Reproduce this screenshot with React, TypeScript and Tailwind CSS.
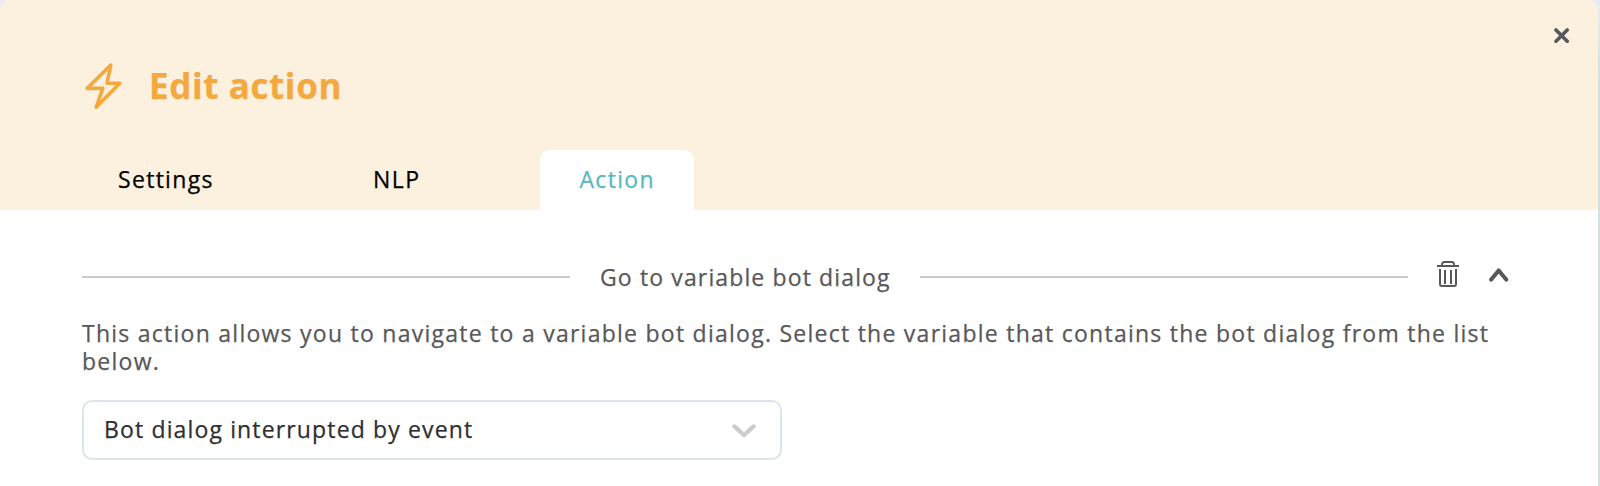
function BoltIcon() {
  return (
    <svg width="40" height="50" viewBox="0 0 40 50" fill="none" stroke="#f3a93f" strokeWidth="3.6" strokeLinecap="round" strokeLinejoin="round">
      <path d="M27.8 4 4.2 27.4h15.6L13.2 46.2 36.8 22.2H24Z" />
    </svg>
  );
}

function TrashIcon() {
  return (
    <svg width="22" height="26" viewBox="0 0 22 26" fill="none" stroke="#58585a">
      <path d="M0 5h22" strokeWidth="2" />
      <path d="M5 5V3.4Q5 1 7.4 1h7.2Q17 1 17 3.4V5" strokeWidth="1.8" />
      <path d="M3 8v15.6Q3 25 4.4 25h13.2Q19 25 19 23.6V8" strokeWidth="2" />
      <path d="M8 9v14M14 9v14" strokeWidth="2" />
    </svg>
  );
}

function ChevronUpIcon() {
  return (
    <svg width="20" height="14" viewBox="0 0 20 14" fill="none" stroke="#58585a" strokeWidth="4" strokeLinecap="round" strokeLinejoin="round">
      <path d="m2.2 11.6 7.5-9.2 7.5 9.2" />
    </svg>
  );
}

function ChevronDownIcon() {
  return (
    <svg width="24" height="14" viewBox="0 0 24 14" fill="none" stroke="#cbcbcb" strokeWidth="4.2" strokeLinecap="round">
      <path d="m2.4 2.4 9.6 8.6 9.6-8.6" />
    </svg>
  );
}

function CloseIcon() {
  return (
    <svg width="16" height="16" viewBox="0 0 16 16" fill="none" stroke="#58585a" strokeWidth="3.6" strokeLinecap="round">
      <path d="M2 2l11.2 11.2M13.2 2 2 13.2" />
    </svg>
  );
}

export default function App() {
  return (
    <div className="h-[486px] w-[1600px] overflow-hidden bg-[#d3e1e1] bg-linear-to-b from-[#e9edf1] to-[#d3e1e1] to-[80px] pr-[2px] font-['Open_Sans',sans-serif] text-[23px] leading-7 text-[#58585a] [-webkit-text-stroke:0.25px_currentColor]">
      <div className="h-full overflow-hidden rounded-t-[10px] bg-white">
        <header className="flex h-[210px] flex-col justify-between bg-[#fcf0de]">
          <div className="flex items-start justify-between pr-7 pl-[83px]">
            <div className="flex pt-[61px] text-[#f3a93f]">
              <BoltIcon />
              <h1 className="mt-px ml-[26px] text-[35px] leading-[48px] font-bold tracking-[0.6px]">Edit action</h1>
            </div>
            <button className="mt-[28px]" aria-label="Close">
              <CloseIcon />
            </button>
          </div>
          <nav className="flex h-[60px] pl-[82px] text-black">
            <button className="flex w-[254px] pt-[15px] pl-9 tracking-[1.3px]">Settings</button>
            <button className="flex w-[204px] pt-[15px] pl-[37px] tracking-[1.5px]">NLP</button>
            <button className="flex w-[154px] rounded-t-[10px] bg-white pt-[15px] pl-[39.5px] tracking-[1.3px] text-[#55b9be]">Action</button>
          </nav>
        </header>
        <main className="pl-[82px]">
          <div className="flex h-[106px] items-start">
            <div className="mt-[66px] h-[2px] w-[488px] bg-[#cacaca]" />
            <h2 className="w-[350px] pt-[53px] pl-[30px] whitespace-nowrap tracking-[1.13px]">Go to variable bot dialog</h2>
            <div className="mt-[66px] h-[2px] w-[488px] bg-[#cacaca]" />
            <button className="mt-[51px] ml-[29px]" aria-label="Delete">
              <TrashIcon />
            </button>
            <button className="mt-[58px] ml-[30px]" aria-label="Collapse">
              <ChevronUpIcon />
            </button>
          </div>
          <p className="mt-[3px] w-[1426px] tracking-[1.255px]">
            This action allows you to navigate to a variable bot dialog. Select the variable that contains the bot dialog from the list below.
          </p>
          <div className="mt-[25px] flex h-[60px] w-[700px] items-start justify-between rounded-[10px] border-2 border-[#dde3ee] pr-6 pl-5 text-[#2f2f31]">
            <span className="pt-[13px] tracking-[1.14px]">Bot dialog interrupted by event</span>
            <span className="mt-[22px]">
              <ChevronDownIcon />
            </span>
          </div>
        </main>
      </div>
    </div>
  );
}
